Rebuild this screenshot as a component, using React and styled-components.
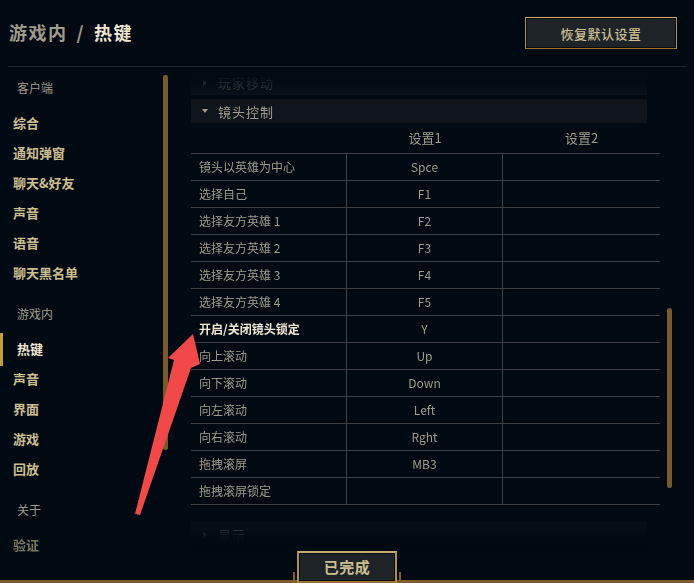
import React from "react";
import styled, { createGlobalStyle } from "styled-components";

const Global = createGlobalStyle`
  html, body { margin: 0; padding: 0; background: #010a13; }
  body { font-family: "Noto Sans CJK SC", "Noto Sans", sans-serif; }
  * { box-sizing: border-box; }
`;

const Page = styled.div`
  position: relative;
  width: 694px;
  height: 583px;
  background: #010a13;
  display: flex;
  flex-direction: column;
  overflow: hidden;
`;

const Header = styled.header`
  height: 67px;
  margin: 0 8px;
  border-bottom: 1px solid #1f252b;
  display: flex;
  align-items: center;
  justify-content: space-between;
  padding: 0 9px 0 1px;
`;

const Title = styled.h1`
  margin: 0 0 2px;
  font-size: 18px;
  font-weight: 700;
  letter-spacing: 1.5px;
  color: #a09b8c;
  display: flex;
  gap: 9px;
`;

const TitleCurrent = styled.span`
  color: #f0e6d2;
`;

const GoldButton = styled.button`
  font-family: inherit;
  height: ${(p) => p.$h}px;
  width: ${(p) => p.$w}px;
  background: #1e2328;
  border: ${(p) => p.$b}px solid #b08e4f;
  border-top-color: #c8aa6e;
  border-bottom-color: #9a7330;
  color: #cdbe91;
  font-size: ${(p) => p.$fs}px;
  font-weight: ${(p) => p.$fw};
  letter-spacing: 0.5px;
  padding: 0 0 ${(p) => p.$pb || 0}px;
  cursor: pointer;
  box-shadow: inset 0 0 0 1px #0a0e12;
`;

const Main = styled.div`
  flex: 1;
  display: flex;
  min-height: 0;
`;

const Sidebar = styled.nav`
  width: 191px;
  display: flex;
  flex-shrink: 0;
`;

const NavList = styled.div`
  width: 163px;
  padding-top: 9px;
`;

const SectionLabel = styled.div`
  height: 24px;
  line-height: 24px;
  padding-left: 17px;
  font-size: 12px;
  color: #a09b8c;
  margin-top: 14px;
  margin-bottom: 8px;
  &:first-child { margin-top: 0; margin-bottom: 8px; }
`;

const NavItem = styled.div`
  position: relative;
  height: 30px;
  line-height: 30px;
  padding-left: ${(p) => (p.$active ? 17 : 13)}px;
  font-size: 13px;
  font-weight: 700;
  color: ${(p) => (p.$active ? "#f0e6d2" : "#cdbe91")};
  opacity: ${(p) => (p.$faded ? 0.6 : 1)};
  &::before {
    content: "";
    display: ${(p) => (p.$active ? "block" : "none")};
    position: absolute;
    left: 0;
    top: -1px;
    width: 3px;
    height: 33px;
    background: #c89b3c;
  }
`;

const Track = styled.div`
  width: 5px;
  margin-left: ${(p) => p.$ml}px;
  flex-shrink: 0;
`;

const Thumb = styled.div`
  width: 5px;
  margin-top: ${(p) => p.$top}px;
  height: ${(p) => p.$h}px;
  background: #785a28;
  border-radius: ${(p) => p.$r}px;
`;

const Content = styled.div`
  display: flex;
  flex: 1;
  min-width: 0;
`;

const Scroll = styled.div`
  width: 469px;
  overflow: hidden;
  padding-top: 3px;
  -webkit-mask-image: linear-gradient(to bottom, rgba(0,0,0,0.05) 0, rgba(0,0,0,0.1) 12px, rgba(0,0,0,0.3) 22px, #000 31px, #000 calc(100% - 44px), rgba(0,0,0,0.05) calc(100% - 14px), transparent 100%);
  mask-image: linear-gradient(to bottom, rgba(0,0,0,0.05) 0, rgba(0,0,0,0.1) 12px, rgba(0,0,0,0.3) 22px, #000 31px, #000 calc(100% - 44px), rgba(0,0,0,0.05) calc(100% - 14px), transparent 100%);
`;

const Group = styled.div`
  width: 456px;
  height: ${(p) => p.$h}px;
  background: #10151b;
  display: flex;
  align-items: center;
  gap: 10px;
  padding-left: 11px;
  margin-top: ${(p) => p.$mt}px;
  font-size: 13px;
  color: #a09b8c;
  letter-spacing: 1px;
`;

const Caret = styled.span`
  width: 0;
  height: 0;
  border-left: 3px solid transparent;
  border-right: 3px solid transparent;
  border-top: 4px solid #a09b8c;
  ${(p) => p.$closed && "transform: rotate(-90deg);"}
`;

const Table = styled.div`
  display: grid;
  grid-template-columns: 156px 156px 157px;
`;

const HeadCell = styled.div`
  height: 31px;
  display: flex;
  align-items: flex-end;
  justify-content: center;
  padding-bottom: 6px;
  font-size: 13px;
  color: #a09b8c;
  border-bottom: 1px solid #3d3f44;
`;

const Cell = styled.div`
  height: 27px;
  display: flex;
  align-items: center;
  justify-content: ${(p) => (p.$label ? "flex-start" : "center")};
  padding-left: ${(p) => (p.$label ? 8 : 0)}px;
  padding-bottom: 1px;
  font-size: 12px;
  font-weight: ${(p) => (p.$bold ? 700 : 400)};
  color: ${(p) => (p.$bold ? "#f0e6d2" : "#a09b8c")};
  border-bottom: 1px solid #3d3f44;
  border-right: ${(p) => (p.$last ? "none" : "1px solid #3d3f44")};
`;

const Footer = styled.footer`
  height: 32px;
  display: flex;
  justify-content: center;
  background: linear-gradient(#7d5f2a, #7d5f2a) bottom / 100% 3px no-repeat;
`;

const DoneWrap = styled.div`
  position: relative;
  &::before, &::after {
    content: "";
    position: absolute;
    bottom: 0;
    width: 2px;
    height: 11px;
    background: #7d5f2a;
  }
  &::before { left: -4px; }
  &::after { right: -4px; }
`;

const Arrow = styled.svg`
  position: absolute;
  left: 0;
  top: 0;
  pointer-events: none;
`;

const rows = [
  ["镜头以英雄为中心", "Spce"],
  ["选择自己", "F1"],
  ["选择友方英雄 1", "F2"],
  ["选择友方英雄 2", "F3"],
  ["选择友方英雄 3", "F4"],
  ["选择友方英雄 4", "F5"],
  ["开启/关闭镜头锁定", "Y", true],
  ["向上滚动", "Up"],
  ["向下滚动", "Down"],
  ["向左滚动", "Left"],
  ["向右滚动", "Rght"],
  ["拖拽滚屏", "MB3"],
  ["拖拽滚屏锁定", ""],
];

export default function App() {
  return (
    <>
      <Global />
      <Page>
        <Header>
          <Title>
            <span>游戏内</span>
            <span>/</span>
            <TitleCurrent>热键</TitleCurrent>
          </Title>
          <GoldButton $w={152} $h={32} $b={1} $fs={13} $fw={500}>
            恢复默认设置
          </GoldButton>
        </Header>
        <Main>
          <Sidebar>
            <NavList>
              <SectionLabel>客户端</SectionLabel>
              <NavItem>综合</NavItem>
              <NavItem>通知弹窗</NavItem>
              <NavItem>聊天&amp;好友</NavItem>
              <NavItem>声音</NavItem>
              <NavItem>语音</NavItem>
              <NavItem>聊天黑名单</NavItem>
              <SectionLabel>游戏内</SectionLabel>
              <NavItem $active>热键</NavItem>
              <NavItem>声音</NavItem>
              <NavItem>界面</NavItem>
              <NavItem>游戏</NavItem>
              <NavItem>回放</NavItem>
              <SectionLabel>关于</SectionLabel>
              <NavItem $faded>验证</NavItem>
            </NavList>
            <Track $ml={0}>
              <Thumb $top={8} $h={375} $r={2} />
            </Track>
          </Sidebar>
          <Content>
            <Scroll>
              <Group $h={25} $mt={0}>
                <Caret $closed />
                玩家移动
              </Group>
              <Group $h={24} $mt={4}>
                <Caret />
                镜头控制
              </Group>
              <Table>
                <HeadCell />
                <HeadCell>设置1</HeadCell>
                <HeadCell>设置2</HeadCell>
                {rows.map(([label, key, bold]) => (
                  <React.Fragment key={label}>
                    <Cell $label $bold={bold}>{label}</Cell>
                    <Cell>{key}</Cell>
                    <Cell $last />
                  </React.Fragment>
                ))}
              </Table>
              <Group $h={25} $mt={17}>
                <Caret $closed />
                显示
              </Group>
            </Scroll>
            <Track $ml={7}>
              <Thumb $top={241} $h={180} $r={3} />
            </Track>
          </Content>
        </Main>
        <Footer>
          <DoneWrap>
            <GoldButton $w={100} $h={32} $b={2} $fs={15} $fw={700} $pb={2}>
              已完成
            </GoldButton>
          </DoneWrap>
        </Footer>
        <Arrow width="694" height="583" viewBox="0 0 694 583">
          <polygon
            points="193,334 200,364 191,368 140,515 135,514 174,360 168,358"
            fill="#f24848"
          />
        </Arrow>
      </Page>
    </>
  );
}
